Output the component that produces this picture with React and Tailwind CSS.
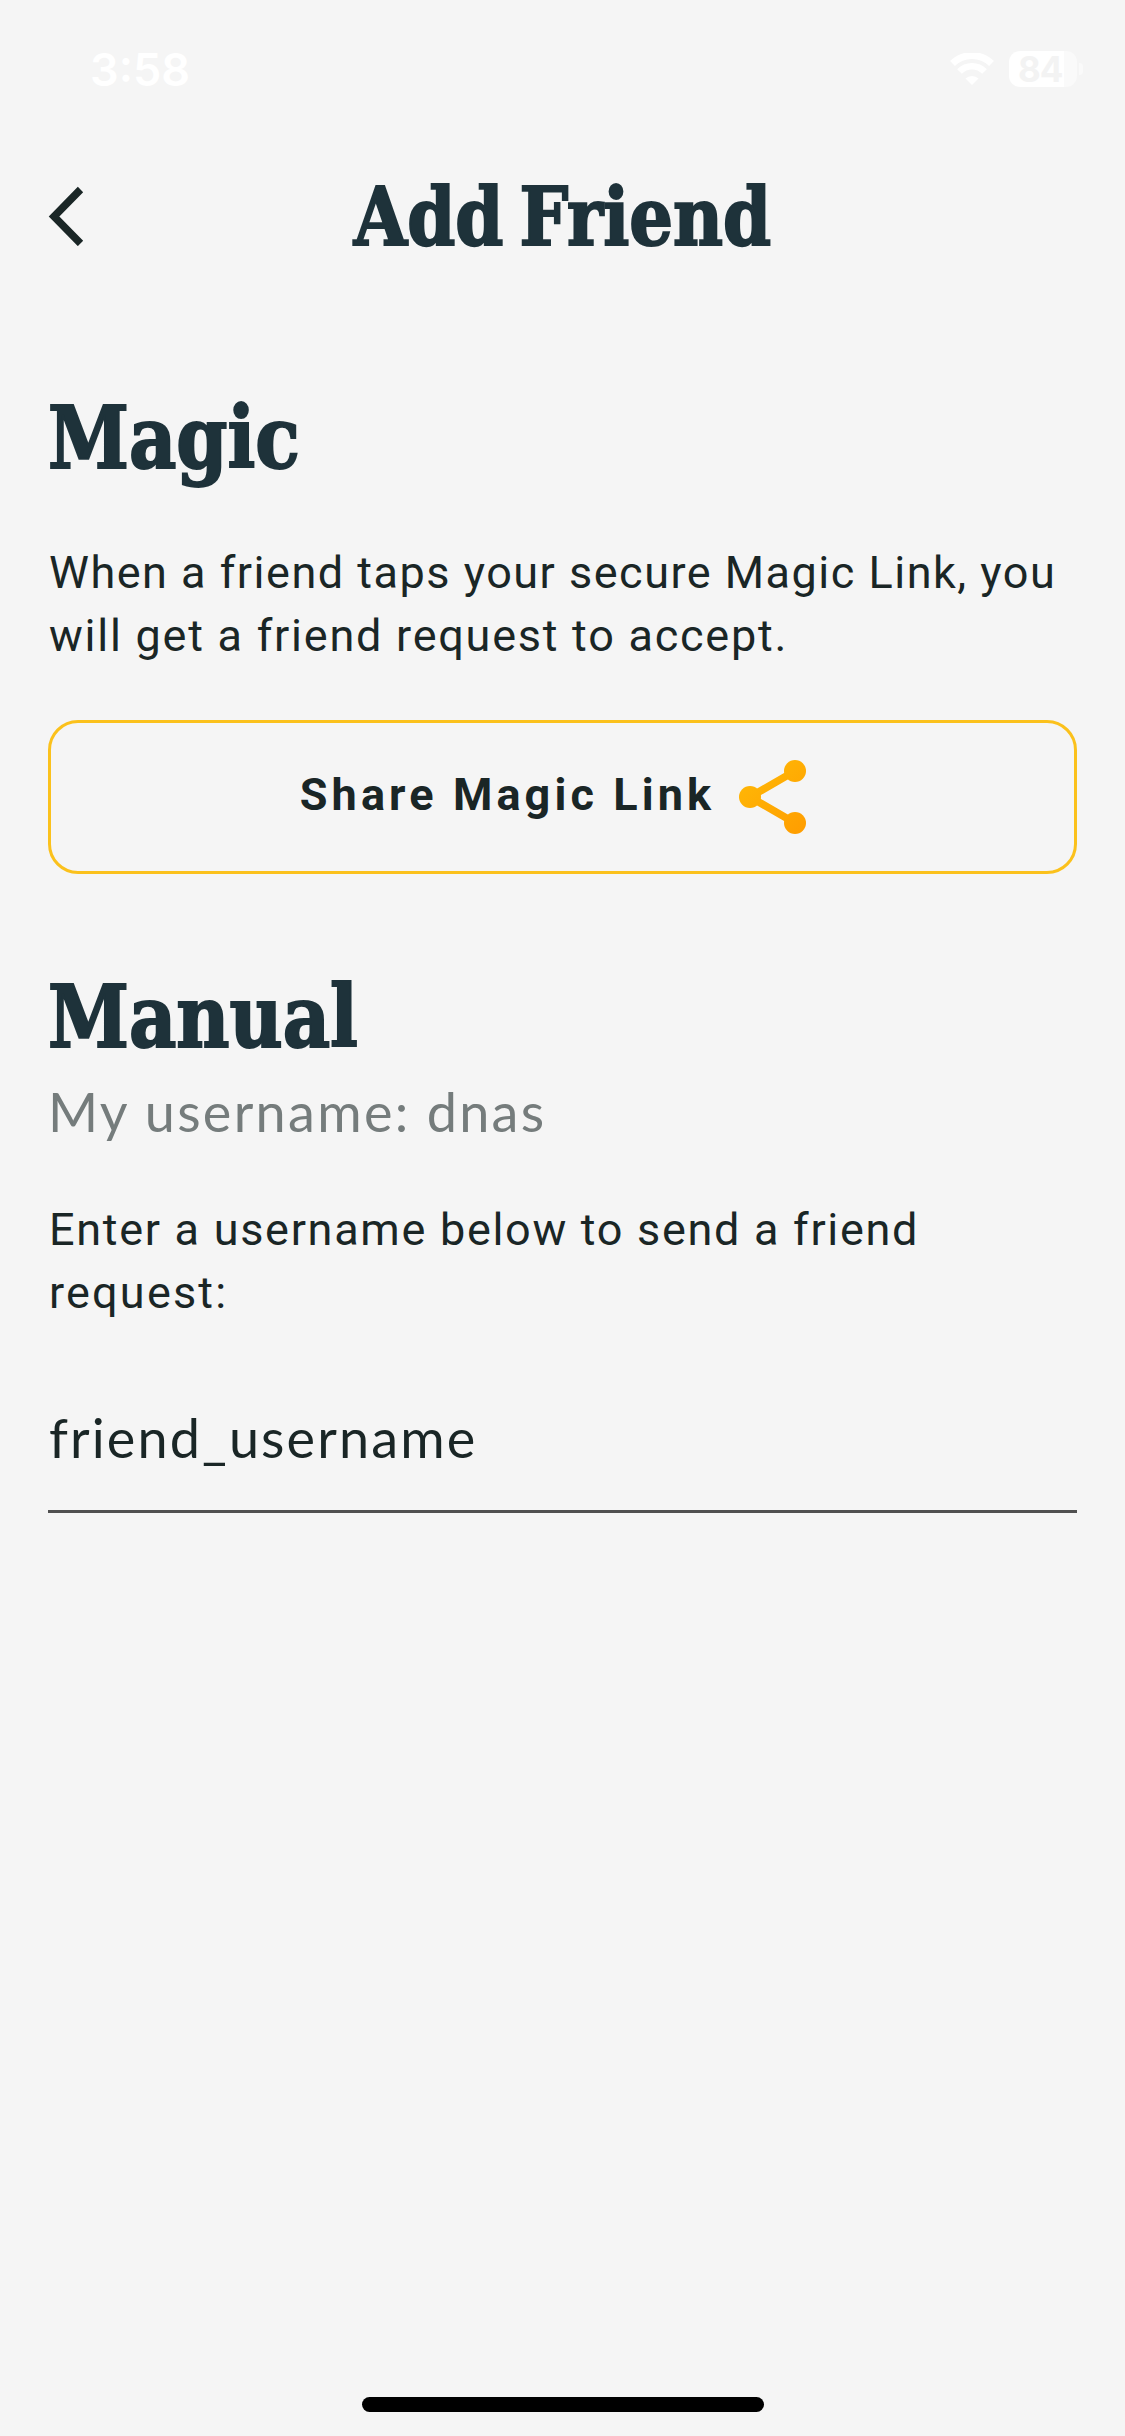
import React, { useState } from 'react';

const BackIcon = () => (
  <svg className="w-9 h-[60px]" viewBox="0 0 36 60" fill="none">
    <path d="M32.5 3.5 L6 30.5 L32.5 57.5" stroke="#1a2626" strokeWidth="7.5" />
  </svg>
);

const ShareIcon = () => (
  <svg className="w-[68px] h-[76px]" viewBox="0 0 68 76" fill="none">
    <defs>
      <linearGradient id="share" x1="0" y1="0" x2="68" y2="76" gradientUnits="userSpaceOnUse">
        <stop offset="0" stopColor="#ffbc07" />
        <stop offset="1" stopColor="#ff9c00" />
      </linearGradient>
    </defs>
    <path d="M56 12 L11 38 L56 64" stroke="url(#share)" strokeWidth="7.5" />
    <circle cx="56" cy="12" r="11" fill="url(#share)" />
    <circle cx="11" cy="38" r="11" fill="url(#share)" />
    <circle cx="56" cy="64" r="11" fill="url(#share)" />
  </svg>
);

const WifiIcon = () => (
  <svg className="w-11 h-8" viewBox="0 0 44 32" fill="none" stroke="white">
    <path d="M2.5 10.5 A28 28 0 0 1 41.5 10.5" strokeWidth="7" />
    <path d="M9.5 18.5 A17.5 17.5 0 0 1 34.5 18.5" strokeWidth="6.5" />
    <path d="M22 32 L15.5 25.5 A9.5 9.5 0 0 1 28.5 25.5 Z" fill="white" stroke="none" />
  </svg>
);

const StatusBar = () => (
  <div className="h-[138px] pt-[51px] pl-[90px] pr-[42px] flex justify-between items-start">
    <span className="font-['Inter',sans-serif] font-semibold text-[45px] leading-[37px] text-white">3:58</span>
    <div className="flex items-center">
      <WifiIcon />
      <div className="ml-[15px] w-[68px] h-9 rounded-[11px] bg-[linear-gradient(to_right,white_81%,#fafafa_81%)] flex items-center pl-[9px]">
        <span className="font-['Inter',sans-serif] font-bold text-[35px] leading-9 tracking-[-1px] text-[#f3f3f3]">84</span>
      </div>
      <div className="ml-[2px] w-1 h-3 rounded-r-full bg-[#fafafa]" />
    </div>
  </div>
);

const SectionTitle = ({ children }) => (
  <h2 className="h-[100px] leading-[102px] font-['DejaVu_Serif_Condensed','DejaVu_Serif',serif] font-bold text-[86px] text-[#1e323a] [-webkit-text-stroke:2px_#1e323a] origin-left scale-x-[0.945] whitespace-nowrap">
    {children}
  </h2>
);

const AddFriendPage = () => {
  const [username, setUsername] = useState('friend_username');

  return (
    <div className="w-[1125px] h-[2436px] bg-[#f5f5f5] flex flex-col overflow-hidden">
      <StatusBar />

      <header className="h-[156px] px-12 grid grid-cols-[36px_1fr_36px] items-center">
        <button aria-label="Back">
          <BackIcon />
        </button>
        <h1 className="pt-0.5 text-center font-['DejaVu_Serif_Condensed','DejaVu_Serif',serif] font-bold text-[80px] leading-[100px] [word-spacing:-8px] text-[#1e323a] [-webkit-text-stroke:2px_#1e323a] scale-x-[0.955] whitespace-nowrap">
          Add Friend
        </h1>
      </header>

      <main className="px-12 pt-[93px] flex-1 text-[#1a2626]">
        <SectionTitle>Magic</SectionTitle>
        <p className="mt-[54px] pl-px font-['Roboto',sans-serif] text-[45px] leading-[63px] tracking-[1.5px] whitespace-nowrap">
          When a friend taps your secure Magic Link, you
          <br />
          <span className="tracking-[1.75px]">will get a friend request to accept.</span>
        </p>

        <button className="mt-[53px] pr-[18px] w-full h-[154px] border-3 border-[#fbc11c] rounded-[30px] flex items-center justify-center">
          <span className="pb-1 font-['Roboto',sans-serif] font-bold text-[45px] tracking-[4.1px]">
            Share Magic Link
          </span>
          <span className="ml-6">
            <ShareIcon />
          </span>
        </button>

        <div className="mt-[92px]">
          <SectionTitle>Manual</SectionTitle>
        </div>
        <p className="mt-1.5 h-20 leading-[80px] font-['Lato',sans-serif] text-[54px] tracking-[2.3px] text-[#757c7c]">
          My username: dnas
        </p>

        <p className="mt-[46px] pl-px font-['Roboto',sans-serif] text-[45px] leading-[63px] tracking-[1.7px] whitespace-nowrap">
          Enter a username below to send a friend
          <br />
          <span className="tracking-[2.2px]">request:</span>
        </p>
        <input
          className="block mt-[42px] pl-px pb-px w-full h-[147px] border-b-3 border-[#505050] outline-none font-['Lato',sans-serif] text-[54px] tracking-[2.1px]"
          value={username}
          onChange={(e) => setUsername(e.target.value)}
        />
      </main>

      <div className="mx-auto mb-6 w-[402px] h-[15px] rounded-full bg-black" />
    </div>
  );
};

export default AddFriendPage;
